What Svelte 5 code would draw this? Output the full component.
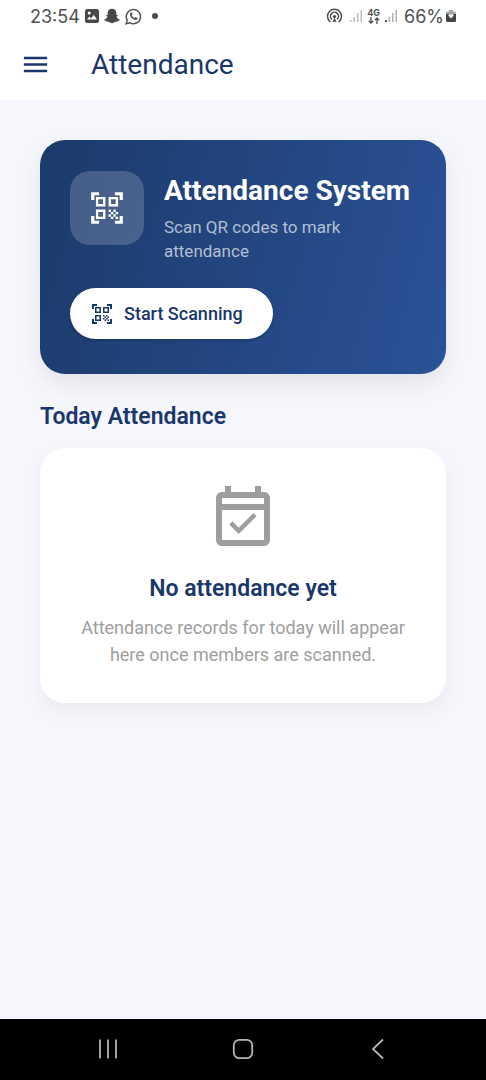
<script>
  const qrPath =
    'M9.5 6.5v3h-3v-3h3M11 5H5v6h6V5zm-1.5 9.5v3h-3v-3h3M11 13H5v6h6v-6zm6.5-6.5v3h-3v-3h3M19 5h-6v6h6V5zm-6 8h1.5v1.5H13V13zm1.5 1.5H16V16h-1.5v-1.5zM16 13h1.5v1.5H16V13zm-3 3h1.5v1.5H13V16zm1.5 1.5H16V19h-1.5v-1.5zM16 16h1.5v1.5H16V16zm1.5-1.5H19V16h-1.5v-1.5zm0 3H19V19h-1.5v-1.5zM22 7h-2V4h-3V2h5v5zm0 15v-5h-2v3h-3v2h5zM2 22h5v-2H4v-3H2v5zM2 2v5h2V4h3V2H2z';
</script>

<div class="screen">
  <div class="status">
    <div class="group left">
      <span class="time">23:54</span>
      <svg width="14" height="14" viewBox="0 0 14 14" aria-hidden="true">
        <path fill="#484848" fill-rule="evenodd" d="M2.5 0h9A2.5 2.5 0 0 1 14 2.5v9a2.5 2.5 0 0 1-2.5 2.5h-9A2.5 2.5 0 0 1 0 11.500v-9A2.500 2.500 0 0 1 2.500 0zM2 10.500h10L8.800 6 6 9.200 4.300 7.600zM4.200 2.500a1.500 1.500 0 1 0 0 3a1.500 1.500 0 0 0 0-3z" />
      </svg>
      <svg width="16" height="16" viewBox="0 0 16 16" aria-hidden="true">
        <path fill="#484848" d="M8 .8c2.600 0 4.300 1.900 4.300 4.200v1.800c.6.300 1.300-.3 1.600.2.300.7-1.400 1-1.300 1.700.5 1.400 1.500 2.300 3.100 2.800.2.900-1.200 1.100-2 1.300-.2.500-.1.900-.6.900-.8 0-1.700-.2-2.500.4-.7.500-1.500 1.100-2.600 1.100s-1.900-.6-2.600-1.100c-.8-.6-1.700-.4-2.500-.4-.5 0-.4-.4-.6-.9-.8-.2-2.200-.4-2-1.300 1.600-.5 2.600-1.400 3.100-2.800.1-.7-1.600-1-1.300-1.700.3-.5 1 .1 1.600-.2V5C3.700 2.700 5.400.8 8 .8z" />
      </svg>
      <svg width="17" height="17" viewBox="0 0 17 17" aria-hidden="true">
        <path fill="none" stroke="#555" stroke-width="1.500" d="M1.200 15.800l1-3.700A7.100 7.100 0 1 1 4.900 14.800z" />
        <path fill="#555" d="M5.600 4.600c.5-.4 1-.3 1.200.1l.7 1.600c.1.400-.5.800-.7 1.200.7 1.200 1.600 2 2.800 2.500.4-.3.700-1 1.100-.9l1.600.8c.4.200.2.900-.1 1.300-.9 1-2.200.8-3.500.2C6.900 10.600 5.500 9 5 7.300c-.3-1 .1-2.200.6-2.700z" />
      </svg>
      <span class="dot"></span>
    </div>
    <div class="group right">
      <svg class="cast" width="17" height="16" viewBox="0 0 17 16" aria-hidden="true">
        <g fill="none" stroke="#505050" stroke-width="1.500" stroke-linecap="round">
          <path d="M4 13.600a7 7 0 1 1 9 0" />
          <path d="M5.500 10.900a4 4 0 1 1 6 0" />
        </g>
        <circle cx="8.500" cy="8.600" r="1.600" fill="#505050" />
        <path fill="#505050" d="M8.500 9.800l2.200 4H6.300z" />
      </svg>
      <svg width="14" height="14" viewBox="0 0 14 14" aria-hidden="true">
        <path fill="#bcbcbc" d="M1 11h1.500v2H1zM4.500 8H6v5H4.500zM8 4h1.500v9H8zM11.500 1H13v12h-1.500z" />
      </svg>
      <span class="network">
        <span>4G</span>
        <svg width="12" height="7" viewBox="0 0 12 7" aria-hidden="true">
          <path fill="none" stroke="#505050" stroke-width="1.300" d="M3 0v6M.8 3.800L3 6l2.200-2.200M9 7V1M6.800 3.200L9 1l2.200 2.200" />
        </svg>
      </span>
      <svg width="14" height="14" viewBox="0 0 14 14" aria-hidden="true">
        <path fill="#505050" d="M1 11h2v2H1z" />
        <path fill="#b0b0b0" d="M4.500 8H6v5H4.500zM8 4h1.500v9H8zM11.500 1H13v12h-1.500z" />
      </svg>
      <span class="battery">66%</span>
      <svg width="10" height="14" viewBox="0 0 10 14" aria-hidden="true">
        <path fill="#a8a8a8" d="M3 1h4v1.500h1.500A1.500 1.500 0 0 1 10 4v2H0V4a1.500 1.500 0 0 1 1.500-1.500H3z" />
        <path fill="#444" d="M0 5h10v6.500A1.500 1.500 0 0 1 8.500 13h-7A1.500 1.500 0 0 1 0 11.500z" />
        <path fill="#fff" d="M5 9.500L2.400 6.800a1.400 1.400 0 0 1 2.600-1 1.400 1.400 0 0 1 2.600 1z" />
      </svg>
    </div>
  </div>

  <header>
    <button class="menu" aria-label="Open menu">
      <svg width="31" height="31" viewBox="0 0 24 24" aria-hidden="true">
        <path fill="currentColor" d="M3 18h18v-2H3v2zm0-5h18v-2H3v2zm0-7v2h18V6H3z" />
      </svg>
    </button>
    <h1>Attendance</h1>
  </header>

  <main>
    <section class="hero">
      <div class="intro">
        <div class="badge">
          <svg width="38" height="38" viewBox="0 0 24 24" aria-hidden="true"><path fill="currentColor" d={qrPath} /></svg>
        </div>
        <div class="copy">
          <h2>Attendance System</h2>
          <p>Scan QR codes to mark attendance</p>
        </div>
      </div>
      <button class="scan">
        <svg width="24" height="24" viewBox="0 0 24 24" aria-hidden="true"><path fill="currentColor" d={qrPath} /></svg>
        Start Scanning
      </button>
    </section>

    <h2 class="heading">Today Attendance</h2>

    <section class="empty">
      <svg width="72" height="72" viewBox="0 0 24 24" aria-hidden="true">
        <path fill="currentColor" d="M16.530 11.060L15.470 10l-4.880 4.880-2.120-2.120-1.060 1.060L10.590 17l5.940-5.940zM19 3h-1V1h-2v2H8V1H6v2H5c-1.110 0-1.990.9-1.990 2L3 19c0 1.100.89 2 2 2h14c1.100 0 2-.9 2-2V5c0-1.100-.9-2-2-2zm0 16H5V9h14v10zM5 7V5h14v2H5z" />
      </svg>
      <h3>No attendance yet</h3>
      <p>Attendance records for today will appear here once members are scanned.</p>
    </section>
  </main>

  <nav aria-label="System navigation">
    <button aria-label="Recent apps">
      <svg width="24" height="24" viewBox="0 0 24 24" aria-hidden="true">
        <path fill="none" stroke="currentColor" stroke-width="1.800" d="M4 2.500v19M12 2.500v19M20 2.500v19" />
      </svg>
    </button>
    <button aria-label="Home">
      <svg width="24" height="24" viewBox="0 0 24 24" aria-hidden="true">
        <rect x="2.800" y="2.800" width="18.400" height="18.400" rx="5.500" fill="none" stroke="currentColor" stroke-width="1.800" />
      </svg>
    </button>
    <button aria-label="Back">
      <svg width="24" height="24" viewBox="0 0 24 24" aria-hidden="true">
        <path fill="none" stroke="currentColor" stroke-width="1.800" d="M17 2.500L7 12l10 9.500" />
      </svg>
    </button>
  </nav>
</div>

<style>
  :global(body) {
    margin: 0;
  }
  .screen {
    min-height: 100vh;
    display: flex;
    flex-direction: column;
    background: #f5f7fc;
    color: #1a376c;
    font-family: Roboto, 'Liberation Sans', sans-serif;
  }
  h1,
  h2,
  h3,
  p {
    margin: 0;
  }
  button {
    border: 0;
    padding: 0;
    background: none;
    color: inherit;
    font: inherit;
    cursor: pointer;
  }
  svg {
    display: block;
    flex: none;
  }

  .status {
    display: flex;
    justify-content: space-between;
    align-items: center;
    height: 32px;
    padding: 0 30px;
    background: #fff;
    color: #505050;
    font-family: Inter, Roboto, sans-serif;
    font-size: 18px;
  }
  .group {
    display: flex;
    align-items: center;
    gap: 5px;
  }
  .dot {
    width: 6px;
    height: 6px;
    margin-left: 5px;
    border-radius: 50%;
    background: #484848;
  }
  .cast {
    margin-right: 2px;
  }
  .right {
    gap: 4px;
  }
  .network {
    display: flex;
    flex-direction: column;
    align-items: center;
    font-size: 9px;
    font-weight: 700;
    line-height: 8px;
  }
  .battery {
    margin: 0 -2px 0 2px;
  }

  header {
    display: flex;
    align-items: center;
    gap: 40px;
    height: 68px;
    padding: 0 20px 3px;
    box-sizing: border-box;
    background: #fff;
  }
  h1 {
    font-size: 28px;
    font-weight: 400;
    line-height: 36px;
  }

  main {
    flex: 1;
    padding: 40px;
  }
  .hero {
    padding: 31px 30px 35px;
    border-radius: 25px;
    background: linear-gradient(105deg, #1c3a6a, #2a5298);
    box-shadow: 0 10px 25px rgba(0, 0, 0, 0.08);
    color: #fff;
  }
  .intro {
    display: flex;
    gap: 20px;
    margin-bottom: 25px;
  }
  .badge {
    display: grid;
    place-items: center;
    flex: none;
    width: 74px;
    height: 74px;
    border-radius: 20px;
    background: rgba(255, 255, 255, 0.18);
  }
  .copy {
    flex: 1;
    min-width: 0;
  }
  .copy h2 {
    font-size: 28px;
    font-weight: 700;
    line-height: 40px;
    white-space: nowrap;
    margin-bottom: 4px;
  }
  .copy p {
    max-width: 200px;
    color: rgba(255, 255, 255, 0.66);
    font-size: 17px;
    line-height: 24px;
  }
  .scan {
    display: flex;
    align-items: center;
    gap: 10px;
    height: 51px;
    padding: 0 30px 0 20px;
    border-radius: 26px;
    background: #fff;
    box-shadow: 0 1px 3px rgba(0, 0, 0, 0.25);
    color: #1a376c;
    font-size: 18px;
    font-weight: 500;
  }
  .heading {
    margin: 29px 0 17px;
    font-size: 23px;
    font-weight: 600;
    line-height: 28px;
  }
  .empty {
    display: flex;
    flex-direction: column;
    align-items: center;
    padding: 35px 30px;
    border-radius: 25px;
    background: #fff;
    box-shadow: 0 8px 20px rgba(0, 0, 0, 0.05);
    color: #9e9e9e;
    text-align: center;
  }
  h3 {
    margin: 20px 0 11px;
    color: #1a376c;
    font-size: 23px;
    font-weight: 600;
    line-height: 28px;
  }
  .empty p {
    font-size: 18px;
    line-height: 27px;
  }

  nav {
    display: flex;
    justify-content: space-around;
    align-items: center;
    height: 61px;
    padding: 0 40px 2px;
    box-sizing: border-box;
    background: #000;
    color: #b4b4b4;
  }
</style>
